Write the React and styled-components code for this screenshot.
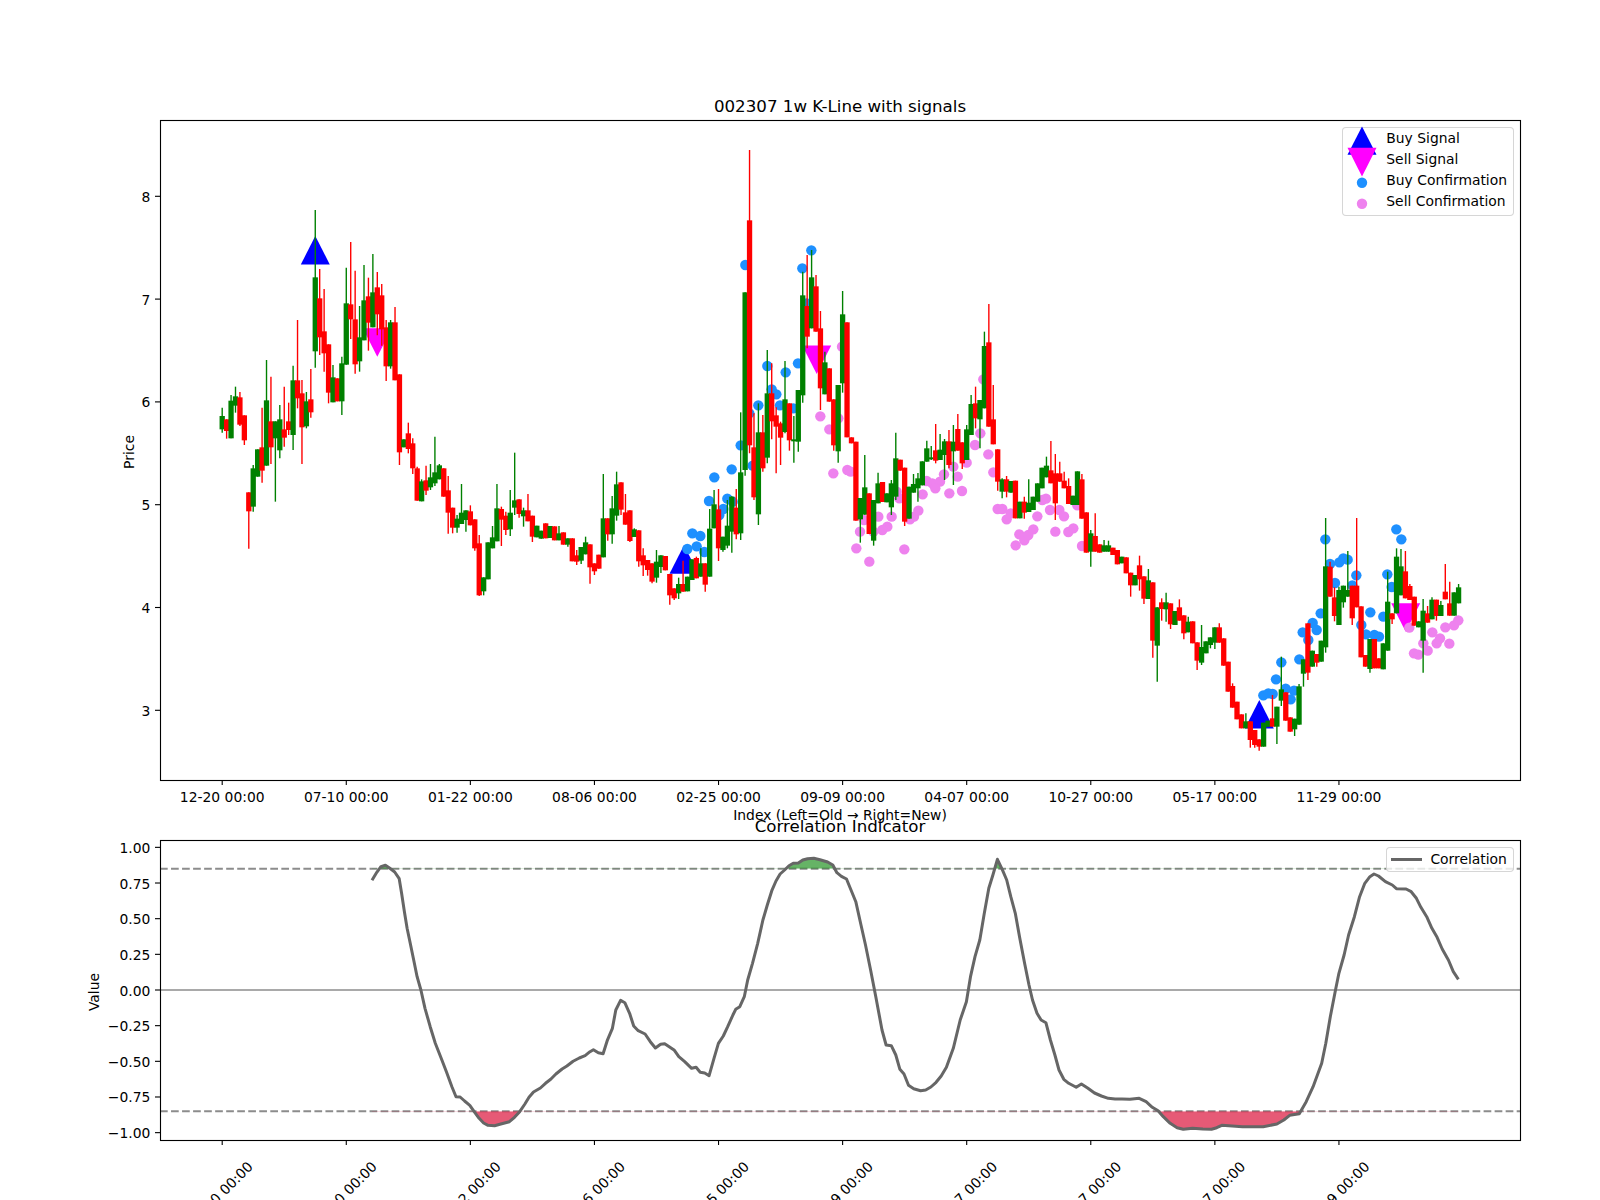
import React from 'react';
import styled, { createGlobalStyle } from 'styled-components';

const FONT = '"DejaVu Sans", "Liberation Sans", sans-serif';
const GREEN = '#008000';
const RED = '#ff0000';
const BLUE = '#0000ff';
const MAGENTA = '#ff00ff';
const DODGER = '#1e90ff';
const VIOLET = '#ee82ee';
const LINE = '#666666';

const GlobalStyle = createGlobalStyle`
  html, body {
    margin: 0;
    background: #fff;
  }
`;

const Figure = styled.main`
  width: 1600px;
  height: 1200px;
  padding-top: 92px;
  box-sizing: border-box;
  overflow: hidden;
  background: #fff;
  font-family: ${FONT};
  color: #000;
`;

const Panel = styled.section`
  display: flex;
  flex-direction: column;
  padding-left: 160px;
  width: 1360px;
`;

const Title = styled.h2`
  margin: ${(p) => (p.$overlap ? '-28px 0 0' : '0')};
  height: 28px;
  font-size: 16.67px;
  line-height: 30px;
  font-weight: 400;
  text-align: center;
  white-space: nowrap;
`;

const Plot = styled.div`
  position: relative;
  width: 1360px;
  height: ${(p) => p.$height}px;
`;

const PlotSvg = styled.svg`
  display: block;
  overflow: visible;
  font-family: ${FONT};
`;

const TickText = styled.text`
  font-size: 13.89px;
  fill: #000;
`;

const XLabel = styled.div`
  height: 60px;
  padding-top: 25px;
  box-sizing: border-box;
  font-size: 13.89px;
  line-height: 20px;
  text-align: center;
  white-space: nowrap;
`;

const Legend = styled.div`
  position: absolute;
  top: 7.3px;
  right: 6px;
  width: ${(p) => p.$width}px;
  padding-bottom: ${(p) => p.$padBottom || 0}px;
  box-sizing: border-box;
  border: 1px solid rgba(204, 204, 204, 0.8);
  border-radius: 4px;
  background: rgba(255, 255, 255, 0.8);
`;

const LegendRow = styled.div`
  display: flex;
  align-items: center;
  height: ${(p) => p.$height || 21}px;
  padding-left: ${(p) => p.$inset || 3.4}px;
  padding-bottom: ${(p) => p.$lift || 0}px;
  box-sizing: border-box;
  gap: ${(p) => p.$gap || 9.6}px;
  font-size: 13.89px;
  white-space: nowrap;
`;

const MarkerKey = styled.svg`
  display: block;
  flex: none;
  overflow: visible;
`;

const LineKey = styled.span`
  display: block;
  flex: none;
  width: 31px;
  height: 3px;
  background: ${LINE};
`;

// points read off the reference, in crop pixels
const fromCrop = (ox, oy, sx, sy, pts) => pts.map(([x, y]) => [ox + x / sx, oy + y / sy]);

const G = 'g';
const R = 'r';
const upper = (rows) => rows.map(([c, t, b, h = t, l = b]) => ({ c, t: 100 + t / 3, b: 100 + b / 3, h: 100 + h / 3, l: 100 + l / 3 }));
const lower = (rows) => rows.map(([c, t, b, h = t, l = b]) => ({ c, t: 400 + t / 3, b: 400 + b / 3, h: 400 + h / 3, l: 400 + l / 3 }));

const bars = [
  ...upper([
    [G, 948, 988, 923, 998], [R, 958, 993, 958, 1016], [G, 902, 1015, 885], [G, 889, 917, 860, 938],
    [R, 892, 974, 876, 978], [R, 946, 1021, 946, 1035],
  ]),
  ...lower([
    [R, 277, 334, 277, 446], [G, 205, 320, 195, 335], [G, 148, 230], [R, 142, 212, 23, 248],
  ]),
  ...upper([
    [G, 901, 1097, 780], [R, 964, 1042, 830, 1092], [G, 964, 1015, 964, 1205], [G, 958, 1051, 915, 1075],
    [R, 988, 1013, 860, 1040], [R, 964, 990, 908, 1005], [G, 841, 1005, 797, 1050], [R, 841, 895, 660, 925],
    [R, 880, 982, 840, 1092], [G, 904, 979, 876, 985], [R, 898, 937, 807, 953], [G, 532, 754, 330, 803],
    [R, 595, 712, 507, 765], [R, 694, 760, 567, 815], [R, 733, 878, 733, 910], [G, 832, 907, 795],
    [R, 835, 904], [G, 790, 904, 770, 945], [G, 610, 794, 503], [R, 613, 658, 426, 717],
    [R, 658, 793, 512, 821], [G, 712, 784, 618, 815], [G, 601, 721, 495], [R, 589, 668, 533, 752],
    [G, 577, 682, 462], [R, 562, 643, 516, 706], [R, 586, 688, 552, 737], [R, 682, 799, 660, 843],
    [G, 667, 799, 660, 806], [R, 667, 841, 621], [R, 823, 1057, 823, 1095], [G, 1018, 1042],
    [R, 1000, 1047, 968, 1060], [R, 1030, 1105, 1015, 1122],
  ]),
  ...lower([
    [R, 205, 302, 200], [G, 244, 304, 238], [R, 241, 272, 197, 285], [G, 232, 262, 192, 270],
    [G, 217, 250, 110, 258], [G, 196, 238, 192], [R, 205, 290], [R, 271, 338, 228, 401],
    [R, 323, 383, 323, 400], [G, 356, 383, 345, 398], [G, 338, 372, 252], [G, 331, 360, 331, 395],
    [R, 334, 376, 316], [R, 358, 445, 358, 452], [R, 430, 586, 405, 588], [G, 532, 574, 532, 586],
    [G, 427, 538], [G, 412, 445, 378], [G, 325, 424, 252], [R, 327, 359, 320, 438],
    [R, 347, 390, 335, 405], [G, 338, 388, 270, 408], [G, 301, 323, 158, 345], [R, 298, 342, 298, 353],
    [G, 331, 349, 323, 380], [R, 331, 364, 282], [R, 347, 410, 347, 426], [G, 377, 412],
    [G, 392, 416], [R, 370, 415], [G, 378, 414], [R, 379, 421],
    [G, 400, 421, 378], [R, 397, 434], [G, 415, 434, 415, 440], [R, 415, 484],
    [R, 466, 485, 450, 495], [G, 441, 482, 441, 492], [G, 427, 463, 410], [R, 433, 502, 433, 551],
    [R, 490, 514, 490, 525], [R, 464, 506], [G, 355, 472, 222], [R, 355, 403, 355, 422],
    [G, 325, 403, 288, 431], [G, 253, 347, 215, 362], [R, 247, 329, 247, 345], [R, 337, 374, 282],
    [R, 331, 423, 331, 426], [G, 388, 411, 385], [R, 391, 484, 391, 500], [R, 466, 496, 445, 528],
    [R, 480, 510, 480, 527], [R, 490, 545, 490, 550], [G, 485, 533, 450, 548], [G, 466, 501, 466, 519],
    [R, 468, 511], [R, 522, 586, 522, 614], [R, 565, 595, 565, 600], [G, 552, 580, 533, 597],
    [R, 552, 575, 482], [G, 530, 574], [G, 478, 540], [R, 474, 535, 470],
    [G, 490, 530, 445], [R, 490, 554, 490, 575], [G, 386, 530, 327], [G, 313, 385, 270],
    [R, 328, 445, 267, 483], [G, 410, 450, 410, 455], [G, 377, 437, 300, 445], [G, 290, 395, 289, 458],
    [R, 323, 403, 267, 418], [G, 217, 400, 37, 420],
  ]),
  ...upper([
    [G, 577, 1110, 577, 1127], [R, 361, 1036, 150, 1060], [R, 1042, 1192, 940, 1200], [G, 997, 1243, 910, 1275],
    [R, 997, 1105, 945, 1115], [G, 880, 1073, 750, 1090], [R, 880, 964, 790, 1018], [R, 946, 980, 922, 1120],
    [R, 970, 1013, 965, 1095], [G, 898, 996, 783, 1000], [R, 910, 1021, 910, 1052], [G, 1018, 1024, 948, 1088],
    [G, 870, 1025, 870, 1055], [G, 586, 886, 515, 908], [R, 618, 710, 465, 745], [G, 532, 685, 450],
    [R, 559, 695, 525], [R, 685, 865, 633, 930], [G, 787, 883, 755], [R, 805, 905],
    [R, 898, 1036, 898, 1052], [G, 855, 1054, 855, 1088], [G, 643, 850, 573, 878], [R, 667, 1012], [R, 1012, 1030],
  ]),
  ...lower([
    [R, 125, 362], [G, 294, 358, 294, 428], [G, 262, 344, 165], [R, 280, 402], [G, 300, 422, 300, 437],
    [G, 250, 310, 218], [R, 246, 306], [G, 280, 307], [G, 250, 322, 240, 345], [G, 175, 290, 98, 300],
    [R, 179, 212], [R, 203, 365, 203, 378], [G, 260, 356], [G, 252, 278, 222], [G, 235, 265, 219, 305],
    [G, 184, 256], [G, 145, 185, 122], [G, 172, 178, 138, 180], [R, 151, 182, 72, 190], [G, 149, 180, 102],
    [G, 124, 165, 117, 240], [R, 124, 195, 90, 205], [G, 125, 154, 75, 255], [R, 87, 152, 42], [R, 127, 190, 127, 207],
    [G, 88, 180, 75], [G, 12, 105, -15],
  ]),
  ...upper([
    [R, 910, 955, 860, 985], [G, 900, 958, 900, 1045], [G, 738, 925, 695], [R, 727, 980, 612], [R, 958, 1033, 855],
  ]),
  ...lower([
    [R, 148, 245, 148, 272], [G, 238, 275, 235, 295], [R, 238, 275, 228, 292], [G, 243, 278], [R, 242, 355],
    [G, 305, 355], [R, 305, 338, 290, 356], [G, 308, 336, 238], [G, 290, 330], [G, 250, 305],
    [G, 203, 265], [G, 197, 232, 170], [R, 211, 250, 123], [R, 220, 310, 162, 360], [R, 220, 245, 185],
    [R, 242, 265, 215], [R, 258, 312, 235], [G, 287, 315], [G, 214, 315], [R, 238, 356, 222],
    [R, 337, 458], [G, 400, 455, 390, 500], [R, 408, 455, 340], [R, 433, 458], [G, 436, 455, 420],
    [G, 436, 455, 422], [R, 443, 465], [R, 450, 493], [G, 470, 490], [R, 472, 520], [R, 518, 556, 518, 590],
    [G, 525, 556], [R, 496, 538, 467, 572], [R, 529, 596, 529, 612], [G, 541, 597, 507], [R, 547, 722, 547, 773],
    [G, 622, 737, 622, 845], [R, 607, 627, 595, 662], [G, 607, 628, 578, 665], [R, 610, 673, 610, 687],
    [G, 633, 675], [R, 622, 662, 598], [R, 646, 700, 646, 718], [G, 665, 697, 650], [R, 664, 730],
    [R, 727, 782, 727, 810], [G, 741, 788, 675, 795], [G, 724, 760], [G, 712, 735, 712, 745], [G, 682, 728, 682, 747],
    [R, 682, 728, 670], [R, 715, 797], [R, 785, 875], [R, 858, 923, 850], [R, 905, 958], [R, 943, 985],
    [G, 964, 985, 940], [R, 964, 1020, 964, 1043], [R, 990, 1035, 990, 1043], [R, 1018, 1040, 1018, 1052],
    [G, 968, 1040], [G, 962, 980], [R, 955, 980, 885], [G, 920, 980, 920, 1032], [G, 868, 902, 770, 918],
    [R, 877, 962], [R, 952, 995], [G, 956, 988, 956, 1008], [G, 859, 974, 852], [G, 778, 821, 778, 860],
    [R, 670, 818, 670, 840], [G, 752, 800], [R, 762, 788, 762, 800], [G, 722, 785], [G, 499, 742, 354, 758],
    [R, 500, 590, 485], [R, 592, 648, 562, 664], [G, 570, 675, 560], [G, 557, 607, 557, 623], [G, 570, 590, 453],
    [R, 557, 655, 557, 675], [R, 557, 622, 354], [R, 619, 772], [R, 765, 800], [G, 717, 807, 717, 818],
    [R, 717, 805], [R, 775, 805], [G, 730, 808], [G, 605, 752, 515], [R, 640, 658, 640, 672],
    [G, 470, 640, 445], [G, 499, 586, 447], [R, 514, 595, 453], [R, 558, 600, 552], [R, 590, 677],
    [G, 664, 682], [G, 632, 722, 597, 818], [R, 640, 668, 618], [G, 599, 658, 592], [R, 599, 648, 599, 662],
    [G, 615, 648, 603], [R, 575, 598, 492], [R, 610, 647, 545], [G, 577, 647], [G, 562, 610, 552],
  ]),
];

const BAR_X0 = 222.2;
const BAR_STEP = 4.4315;

const buyDots = [
  ...fromCrop(640, 400, 3, 3, [
    [142, 447], [157, 400], [170, 439], [181, 408], [193, 456], [207, 303], [223, 232], [238, 345], [250, 327],
    [262, 296], [275, 208], [278, 305], [302, 136],
  ]),
  ...fromCrop(640, 100, 3, 3, [
    [316, 495], [328, 940], [338, 1097], [355, 916], [382, 798], [395, 868], [409, 883], [420, 916], [437, 817],
    [460, 925], [474, 790], [487, 505], [500, 610], [514, 451],
  ]),
  ...fromCrop(1100, 400, 3, 3, [
    [490, 886], [505, 880], [518, 882], [528, 838], [544, 787], [557, 866], [572, 898], [582, 872], [598, 778],
    [608, 697], [625, 720], [638, 669], [650, 690], [662, 640], [676, 418], [690, 492], [705, 549], [718, 487],
    [730, 475], [743, 479], [757, 556], [769, 526], [784, 675], [798, 703], [811, 637], [823, 705], [837, 710],
    [850, 650], [862, 523], [875, 561], [889, 388], [904, 418],
  ]),
];

const sellDots = [
  ...fromCrop(640, 100, 3, 3, [
    [541, 949], [568, 988], [580, 1120], [595, 955], [606, 740], [622, 1110], [632, 1115], [1030, 838], [1021, 1000],
    [1005, 1035], [1045, 1063], [1060, 1117], [980, 1088], [940, 1100], [912, 1123], [953, 1130], [900, 1145],
    [860, 1143], [877, 1150], [886, 1165], [848, 1183], [928, 1180], [966, 1173],
  ]),
  ...fromCrop(640, 400, 3, 3, [
    [770, 275], [778, 295], [715, 350], [755, 350], [742, 380], [727, 390], [700, 395], [660, 395], [672, 360],
    [649, 445], [688, 485], [793, 448], [810, 358], [822, 350], [835, 332], [1073, 327], [1087, 327], [1100, 358],
    [1112, 340], [1127, 436], [1138, 403], [1153, 421], [1165, 405], [1180, 388], [1192, 349], [1207, 300],
    [1218, 296], [1230, 330], [1246, 395], [1258, 330], [1272, 349], [1285, 396], [1300, 385], [1312, 316], [1326, 438],
  ]),
  ...fromCrop(1100, 400, 3, 3, [
    [928, 683], [970, 730], [942, 760], [955, 764], [983, 752], [997, 697], [1010, 730], [1020, 715], [1036, 682],
    [1048, 731], [1062, 676], [1075, 661],
  ]),
];

// tip of each signal triangle
const buySignals = [[315.3, 236], [684, 545.3], [1259.3, 700]];
const sellSignals = [[377.3, 356.7], [816.7, 374], [1405.7, 631.7]];

const corrPoints = [
  ...fromCrop(60, 800, 2.904, 3, [
    [906, 241], [920, 217], [932, 200], [945, 196], [958, 205], [972, 216], [985, 236], [992, 280], [1000, 335],
    [1008, 385], [1018, 435], [1027, 480], [1037, 530], [1048, 570], [1060, 625], [1075, 680], [1090, 730],
    [1107, 775], [1122, 815], [1138, 860], [1150, 890], [1162, 891], [1175, 903], [1190, 916], [1205, 938],
    [1217, 955], [1230, 969], [1243, 976], [1262, 977], [1280, 972], [1305, 965], [1320, 952], [1335, 935],
    [1350, 912], [1362, 892], [1375, 876], [1395, 864], [1410, 850], [1425, 838], [1440, 822], [1458, 807],
    [1472, 798], [1490, 784], [1508, 774], [1525, 767],
  ]),
  ...fromCrop(590, 800, 2.904, 3, [
    [0, 755], [10, 749], [24, 758], [38, 761], [50, 722], [65, 685], [75, 630], [89, 601], [101, 608], [115, 640],
    [127, 678], [140, 692], [160, 702], [175, 725], [190, 744], [205, 733], [217, 731], [230, 740], [245, 751],
    [258, 770], [275, 785], [295, 805], [308, 802], [320, 817], [333, 819], [346, 827], [360, 775], [373, 730],
    [387, 708], [400, 680], [415, 645], [423, 628], [435, 620], [448, 590], [458, 540], [472, 490], [487, 430],
    [502, 360], [515, 315], [528, 272], [540, 243], [552, 222], [565, 210], [578, 197], [590, 190], [605, 189],
    [618, 180], [632, 176], [650, 175], [668, 179], [690, 186], [705, 195], [717, 218], [730, 229], [745, 237],
    [758, 270], [772, 305], [787, 375], [800, 435], [815, 510], [830, 590], [848, 690], [860, 735], [875, 737],
    [888, 765], [900, 808], [912, 822], [925, 856], [940, 866], [960, 872], [975, 870], [990, 861], [1005, 847],
    [1020, 828], [1035, 802], [1055, 745], [1075, 660], [1093, 605], [1105, 530], [1118, 470], [1132, 420],
    [1145, 340], [1158, 265], [1170, 225], [1183, 178], [1197, 208], [1210, 240], [1222, 290], [1235, 340],
    [1248, 415], [1262, 490], [1275, 555], [1285, 600], [1298, 640], [1310, 660], [1324, 668], [1337, 720],
    [1350, 765], [1362, 810], [1376, 838], [1390, 850], [1412, 862], [1427, 852], [1445, 864], [1465, 879],
    [1485, 888], [1505, 895], [1525, 897], [1545, 897], [1568, 898],
  ]),
  ...fromCrop(1060, 800, 2.904, 3, [
    [230, 895], [250, 905], [268, 922], [285, 932], [300, 950], [320, 970], [340, 983], [358, 988], [385, 985],
    [415, 987], [440, 988], [455, 983], [470, 976], [500, 978], [530, 980], [560, 980], [590, 980], [630, 972],
    [650, 960], [667, 946], [695, 941], [715, 905], [735, 860], [760, 790], [772, 730], [785, 650], [800, 570],
    [810, 520], [825, 465], [838, 405], [855, 350], [870, 290], [885, 250], [900, 230], [912, 222], [925, 228],
    [945, 245], [965, 255], [977, 266], [1005, 267], [1020, 275], [1035, 295], [1048, 322], [1065, 350], [1080, 385],
    [1095, 412], [1110, 447], [1128, 480], [1142, 515], [1157, 538],
  ]),
];

const dateLabels = [
  '12-20 00:00', '07-10 00:00', '01-22 00:00', '08-06 00:00', '02-25 00:00',
  '09-09 00:00', '04-07 00:00', '10-27 00:00', '05-17 00:00', '11-29 00:00',
];
const tickX = dateLabels.map((_, i) => BAR_X0 + i * 28 * BAR_STEP);

const priceY = (p) => 710.3 - (p - 3) * 102.8;
const corrY = (v) => 990 - v * 142.65;
const CORR_TICKS = [1, 0.75, 0.5, 0.25, 0, -0.25, -0.5, -0.75, -1];
const corrLabel = (v) => `${v < 0 ? '\u2212' : ''}${Math.abs(v).toFixed(2)}`;

const linePath = corrPoints.map(([x, y], i) => `${i ? 'L' : 'M'}${x.toFixed(1)} ${y.toFixed(1)}`).join('');
const firstX = corrPoints[0][0];
const lastX = corrPoints[corrPoints.length - 1][0];

const upTriangle = ([x, y]) => `${x},${y} ${x + 14.5},${y + 28.5} ${x - 14.5},${y + 28.5}`;
const downTriangle = ([x, y]) => `${x},${y} ${x + 14.5},${y - 28.5} ${x - 14.5},${y - 28.5}`;

const Frame = ({ x, y, w, h }) => (
  <rect x={x + 0.5} y={y + 0.5} width={w} height={h} fill="none" stroke="#000" strokeWidth="1.11" />
);

const Candles = () =>
  bars.map((bar, i) => {
    const x = BAR_X0 + i * BAR_STEP;
    const color = bar.c === G ? GREEN : RED;
    return (
      <g key={i}>
        <line x1={x} x2={x} y1={bar.h} y2={bar.l} stroke={color} strokeWidth="1.39" />
        <rect x={x - 2.65} y={bar.t} width="5.3" height={Math.max(bar.b - bar.t, 1)} fill={color} />
      </g>
    );
  });

const PriceChart = () => (
  <PlotSvg width="1360" height="660" viewBox="160 120 1360 660">
    {buySignals.map((p) => (
      <polygon key={p[0]} points={upTriangle(p)} fill={BLUE} />
    ))}
    {sellSignals.map((p) => (
      <polygon key={p[0]} points={downTriangle(p)} fill={MAGENTA} />
    ))}
    {sellDots.map(([x, y]) => (
      <circle key={`${x}-${y}`} cx={x} cy={y} r="5.2" fill={VIOLET} />
    ))}
    {buyDots.map(([x, y]) => (
      <circle key={`${x}-${y}`} cx={x} cy={y} r="5.2" fill={DODGER} />
    ))}
    <Candles />
    <Frame x={160} y={120} w={1360} h={660} />
    {tickX.map((x, i) => (
      <g key={x}>
        <line x1={x} x2={x} y1={780} y2={785} stroke="#000" strokeWidth="1.11" />
        <TickText x={x} y={802} textAnchor="middle">{dateLabels[i]}</TickText>
      </g>
    ))}
    {[3, 4, 5, 6, 7, 8].map((p) => (
      <g key={p}>
        <line x1={155} x2={160} y1={priceY(p)} y2={priceY(p)} stroke="#000" strokeWidth="1.11" />
        <TickText x={150.3} y={priceY(p) + 5.5} textAnchor="end">{p}</TickText>
      </g>
    ))}
    <TickText transform="translate(133.5 452) rotate(-90)" textAnchor="middle">Price</TickText>
  </PlotSvg>
);

const CorrChart = () => (
  <PlotSvg width="1360" height="300" viewBox="160 840 1360 300">
    <defs>
      <clipPath id="above-band"><rect x="160" y="840" width="1360" height={corrY(0.85) - 840} /></clipPath>
      <clipPath id="below-band"><rect x="160" y={corrY(-0.85)} width="1360" height={1140 - corrY(-0.85)} /></clipPath>
    </defs>
    <line x1="160" x2="1520" y1={corrY(0)} y2={corrY(0)} stroke="#a9a9a9" strokeWidth="2" />
    {[0.85, -0.85].map((v) => (
      <line key={v} x1="160" x2="1520" y1={corrY(v)} y2={corrY(v)} stroke="#8c8c8c" strokeWidth="2" strokeDasharray="7.7 3.33" />
    ))}
    <path d={`${linePath}L${lastX} ${corrY(0.85)}L${firstX} ${corrY(0.85)}Z`} fill="#008000" fillOpacity="0.6" clipPath="url(#above-band)" />
    <path d={`${linePath}L${lastX} ${corrY(-0.85)}L${firstX} ${corrY(-0.85)}Z`} fill="#dc143c" fillOpacity="0.7" clipPath="url(#below-band)" />
    <path d={linePath} fill="none" stroke={LINE} strokeWidth="3" strokeLinejoin="round" />
    <Frame x={160} y={840} w={1360} h={300} />
    {CORR_TICKS.map((v) => (
      <g key={v}>
        <line x1={155} x2={160} y1={corrY(v)} y2={corrY(v)} stroke="#000" strokeWidth="1.11" />
        <TickText x={150.3} y={corrY(v) + 5.5} textAnchor="end">{corrLabel(v)}</TickText>
      </g>
    ))}
    {tickX.map((x, i) => (
      <g key={x}>
        <line x1={x} x2={x} y1={1140} y2={1145} stroke="#000" strokeWidth="1.11" />
        <TickText transform={`translate(${x - 2} 1194) rotate(-45)`} textAnchor="middle" dominantBaseline="central">
          {dateLabels[i]}
        </TickText>
      </g>
    ))}
    <TickText transform="translate(98.5 992) rotate(-90)" textAnchor="middle">Value</TickText>
  </PlotSvg>
);

const KEY_SHAPES = {
  buy: <polygon points="0,-11 14.5,17.3 -14.5,17.3" fill={BLUE} />,
  sell: <polygon points="0,18 14.5,-10.7 -14.5,-10.7" fill={MAGENTA} />,
  buyDot: <circle cy="3.3" r="5.2" fill={DODGER} />,
  sellDot: <circle cy="3.3" r="5.2" fill={VIOLET} />,
};

const SIGNAL_LEGEND = [
  { key: 'buy', label: 'Buy Signal' },
  { key: 'sell', label: 'Sell Signal' },
  { key: 'buyDot', label: 'Buy Confirmation' },
  { key: 'sellDot', label: 'Sell Confirmation' },
];

export default function App() {
  return (
    <Figure>
      <GlobalStyle />
      <Panel>
        <Title>002307 1w K-Line with signals</Title>
        <Plot $height={660}>
          <PriceChart />
          <Legend $width={171.7} $padBottom={2.4}>
            {SIGNAL_LEGEND.map((item) => (
              <LegendRow key={item.key} $lift={2}>
                <MarkerKey width="30" height="21" viewBox="-15 -10.5 30 21">{KEY_SHAPES[item.key]}</MarkerKey>
                {item.label}
              </LegendRow>
            ))}
          </Legend>
        </Plot>
        <XLabel>Index (Left=Old → Right=New)</XLabel>
      </Panel>
      <Panel>
        <Title $overlap>Correlation Indicator</Title>
        <Plot $height={300}>
          <CorrChart />
          <Legend $width={127.6}>
            <LegendRow $height={22.4} $inset={3.6} $gap={8.4}>
              <LineKey />
              Correlation
            </LegendRow>
          </Legend>
        </Plot>
      </Panel>
    </Figure>
  );
}
